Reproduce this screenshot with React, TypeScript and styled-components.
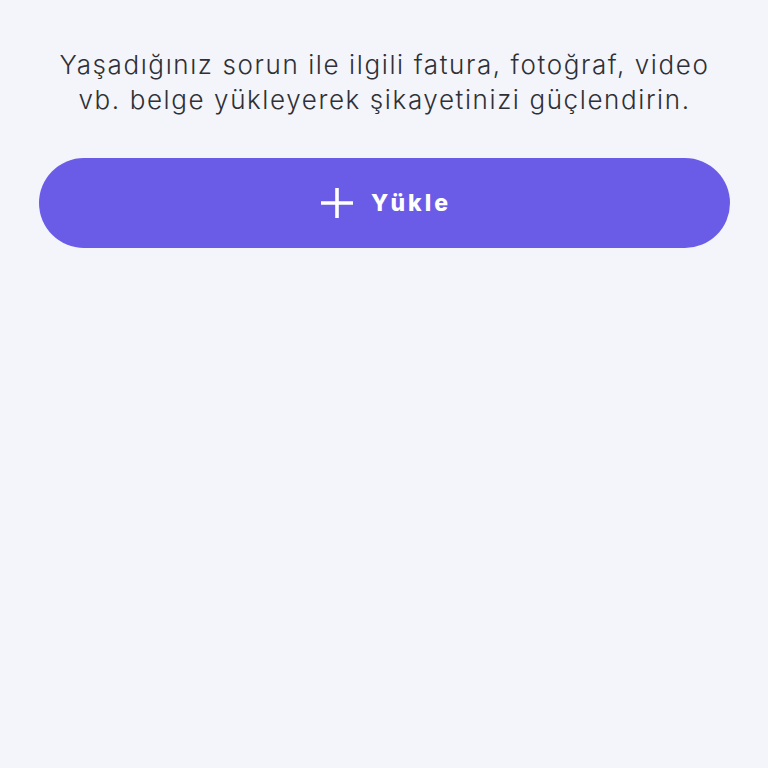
import styled, { createGlobalStyle } from "styled-components";

const GlobalStyle = createGlobalStyle`
  html, body {
    margin: 0;
    padding: 0;
    background: #f3f5fa;
  }
  body {
    font-family: Inter, "Noto Sans", sans-serif;
  }
`;

const Page = styled.div`
  display: flex;
  flex-direction: column;
  align-items: stretch;
  padding: 47px 38px 0 39px;
  min-height: 768px;
  box-sizing: border-box;
`;

const Info = styled.p`
  margin: 0;
  text-align: center;
  font-size: 26px;
  line-height: 35px;
  color: #2f3036;
  font-weight: 300;
  letter-spacing: 1.6px;
`;

const UploadButton = styled.button`
  margin-top: 41px;
  height: 90px;
  border: none;
  border-radius: 45px;
  background: #6b5ce7;
  color: #fff;
  display: flex;
  align-items: center;
  justify-content: center;
  gap: 18px;
  padding: 0;
  font-family: Inter, "Noto Sans", sans-serif;
  font-weight: 800;
  font-size: 23px;
  letter-spacing: 3px;
  cursor: pointer;
`;

const Label = styled.span`
  margin-right: -3px;
`;

const PlusIcon = () => (
  <svg width="32" height="30" viewBox="0 0 32 30" fill="none">
    <path d="M16 0v30M0 15h32" stroke="#fff" strokeWidth="3.6" />
  </svg>
);

export default function App() {
  return (
    <>
      <GlobalStyle />
      <Page>
        <Info>
          Yaşadığınız sorun ile ilgili fatura, fotoğraf, video
          <br />
          vb. belge yükleyerek şikayetinizi güçlendirin.
        </Info>
        <UploadButton>
          <PlusIcon />
          <Label>Yükle</Label>
        </UploadButton>
      </Page>
    </>
  );
}
